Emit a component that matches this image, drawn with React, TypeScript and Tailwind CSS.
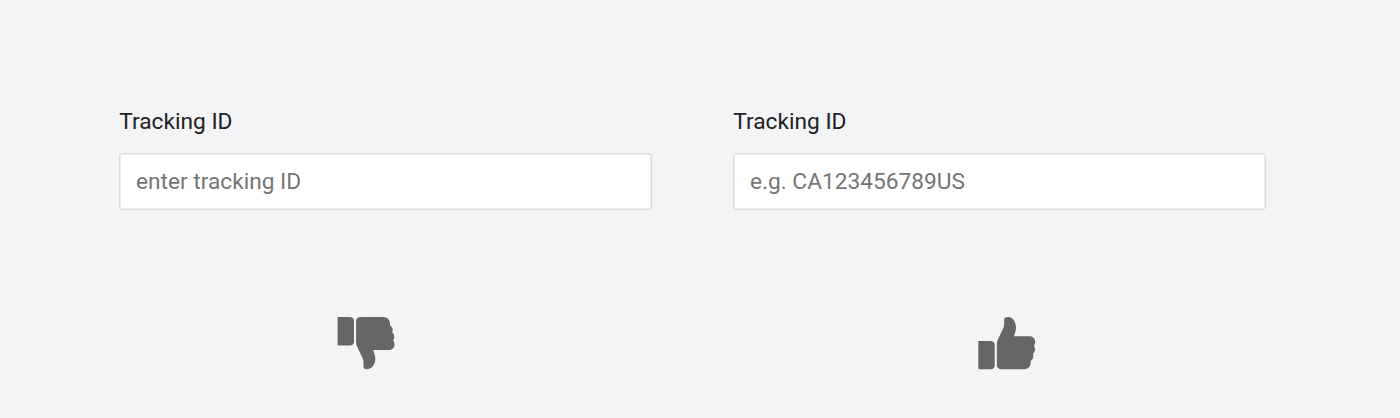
import React from "react";

function Field({ placeholder }: { placeholder: string }) {
  return (
    <label className="block w-[533px]">
      <span className="block pl-[0.3px] pt-px text-[22.7px] leading-[32px] text-[#202124]">Tracking ID</span>
      <input
        type="text"
        placeholder={placeholder}
        className="mt-[15px] block h-[57px] w-full rounded-[3px] border border-[#d9dbde] bg-white px-[16px] pb-px text-[22.7px] text-[#202124] shadow-[inset_0_0_0_1px_#eaebec] outline-none placeholder:text-[#757575]"
      />
    </label>
  );
}

function Thumb({ down = false }: { down?: boolean }) {
  return (
    <svg
      viewBox={down ? "-0.3 -0.4 58 54" : "0 0.3 58 54"}
      className={down ? "h-[54px] w-[58px] -scale-y-100" : "h-[54px] w-[58px]"}
      fill="#666666"
      aria-hidden="true"
    >
      <path d="M0.300 24.200H12.500C15 24.200 16.700 25.800 16.700 28.200V48.500C16.700 50.900 15 52.500 12.500 52.500H1.300Q0.300 52.500 0.300 51.500Z" />
      <path d="M18.800 27.200C18.800 25.600 19.200 24.300 19.900 22.800L25.200 11.500C26 9.800 26.200 8 26.200 6V2.300C26.200 1 28.400 0.300 30.500 0.400C35 0.700 38 5.500 38 11C38 14.200 36.700 16.900 36 19.500H51.500C55.200 19.500 57.200 22 57.200 25C57.200 26.800 56.700 28 55.900 29C57.600 31.500 57.400 35 55 37C56 39.500 55.200 42.700 52.700 44C53.200 49 50.800 52.500 46 52.500H24C21 52.500 18.800 50.900 18.800 48.500Z" />
    </svg>
  );
}

export default function App() {
  return (
    <main className="flex h-[418px] w-[1400px] gap-[81px] bg-[#f3f4f6] pl-[119px] pt-[105px] font-['Roboto',sans-serif]">
      <section>
        <Field placeholder="enter tracking ID" />
        <div className="ml-[218px] mt-[106px]"><Thumb down /></div>
      </section>
      <section>
        <Field placeholder="e.g. CA123456789US" />
        <div className="ml-[245px] mt-[107px]"><Thumb /></div>
      </section>
    </main>
  );
}
